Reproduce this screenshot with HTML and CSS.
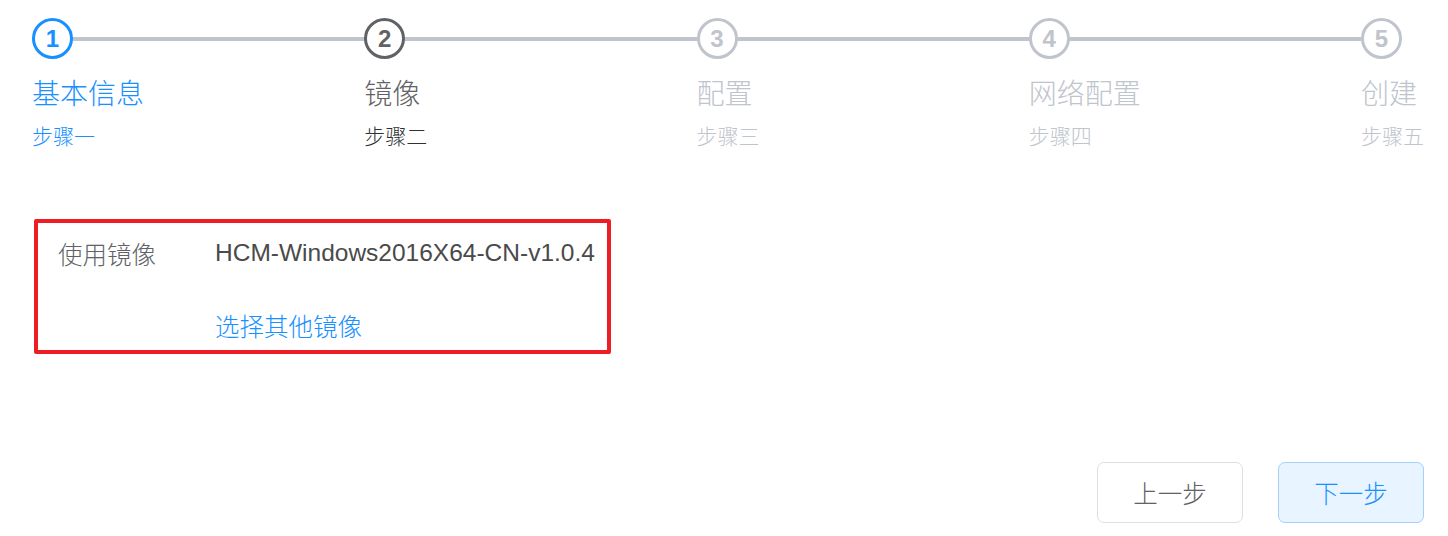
FILE: index.html
```html
<!DOCTYPE html>
<html lang="zh-CN">
<head>
<meta charset="utf-8">
<title>镜像</title>
<link rel="stylesheet" href="styles.css">
</head>
<body>
<div class="page">
  <div class="steps">
    <div class="step is-finish">
      <div class="step-head"><div class="step-line"></div><div class="step-icon">1</div></div>
      <div class="step-title">基本信息</div>
      <div class="step-desc">步骤一</div>
    </div>
    <div class="step is-process">
      <div class="step-head"><div class="step-line"></div><div class="step-icon">2</div></div>
      <div class="step-title">镜像</div>
      <div class="step-desc">步骤二</div>
    </div>
    <div class="step is-wait">
      <div class="step-head"><div class="step-line"></div><div class="step-icon">3</div></div>
      <div class="step-title">配置</div>
      <div class="step-desc">步骤三</div>
    </div>
    <div class="step is-wait">
      <div class="step-head"><div class="step-line"></div><div class="step-icon">4</div></div>
      <div class="step-title">网络配置</div>
      <div class="step-desc">步骤四</div>
    </div>
    <div class="step is-wait step-last">
      <div class="step-head"><div class="step-icon">5</div></div>
      <div class="step-title">创建</div>
      <div class="step-desc">步骤五</div>
    </div>
  </div>

  <div class="image-box">
    <div class="form-row row-first">
      <div class="form-label">使用镜像</div>
      <div class="form-value">HCM-Windows2016X64-CN-v1.0.4</div>
    </div>
    <div class="form-row row-second">
      <div class="form-label"></div>
      <a class="form-link" href="#">选择其他镜像</a>
    </div>
  </div>

  <div class="actions">
    <button class="btn btn-default" type="button">上一步</button>
    <button class="btn btn-primary" type="button">下一步</button>
  </div>
</div>
</body>
</html>
```

FILE: styles.css
```css
html, body {
  margin: 0;
  padding: 0;
  background: #ffffff;
}

body {
  font-family: "Liberation Sans", "Noto Sans CJK SC", sans-serif;
  color: #606266;
}

.page {
  width: 1448px;
  height: 536px;
  box-sizing: border-box;
  padding: 18px 24px 0 32px;
  display: flex;
  flex-direction: column;
}

.steps {
  display: flex;
}

.step {
  flex: 1 1 0;
  min-width: 0;
}

.step-last {
  flex: 0 0 auto;
}

.step-head {
  position: relative;
  height: 41px;
}

.step-line {
  position: absolute;
  left: 0;
  right: 0;
  top: 19px;
  height: 3.5px;
  background: #c0c4cc;
}

.step-icon {
  position: relative;
  z-index: 1;
  width: 41px;
  height: 41px;
  box-sizing: border-box;
  border: 3px solid #c0c4cc;
  border-radius: 50%;
  background: #ffffff;
  display: flex;
  align-items: center;
  justify-content: center;
  font-family: "Liberation Sans", sans-serif;
  font-weight: 700;
  font-size: 24px;
  color: #c0c4cc;
}

.step-title {
  font-family: "Noto Sans CJK SC", sans-serif;
  font-weight: 300;
  font-size: 28px;
  line-height: 66px;
  color: #c0c4cc;
  white-space: nowrap;
}

.step-desc {
  font-family: "Noto Sans CJK SC", sans-serif;
  font-weight: 300;
  font-size: 21px;
  line-height: 28px;
  margin-top: -4px;
  color: #c0c4cc;
  white-space: nowrap;
}

.is-finish .step-icon {
  border-color: #1890ff;
  color: #1890ff;
}

.is-finish .step-title,
.is-finish .step-desc {
  color: #1890ff;
}

.is-process .step-icon {
  border-color: #606266;
  color: #606266;
}

.is-process .step-title {
  color: #606266;
}

.is-process .step-desc {
  color: #303133;
}

.image-box {
  margin-top: 70px;
  margin-left: 2px;
  width: 577px;
  box-sizing: border-box;
  border: 4px solid #ee1c25;
  border-radius: 2px;
  padding: 0 0 0 20px;
}

.form-row {
  display: flex;
  align-items: center;
  font-size: 24.5px;
}

.row-first {
  height: 60px;
}

.row-second {
  height: 50px;
  margin-top: 17px;
}

.form-label {
  width: 157px;
  flex: 0 0 157px;
  font-family: "Noto Sans CJK SC", sans-serif;
  font-weight: 300;
  color: #606266;
}

.form-value {
  font-family: "Liberation Sans", "Noto Sans CJK SC", sans-serif;
  color: #4a4a4a;
}

.form-link {
  font-family: "Noto Sans CJK SC", sans-serif;
  font-weight: 300;
  color: #1890ff;
  text-decoration: none;
}

.actions {
  margin-top: auto;
  margin-bottom: 13px;
  display: flex;
  justify-content: flex-end;
  gap: 35px;
}

.btn {
  width: 146px;
  height: 61px;
  box-sizing: border-box;
  border-radius: 7px;
  font-family: "Noto Sans CJK SC", sans-serif;
  font-weight: 300;
  font-size: 24.5px;
  padding: 0;
  cursor: pointer;
}

.btn-default {
  background: #ffffff;
  border: 1px solid #dcdfe6;
  color: #606266;
}

.btn-primary {
  background: #e8f4ff;
  border: 1px solid #a3d0fd;
  color: #1890ff;
}
```
